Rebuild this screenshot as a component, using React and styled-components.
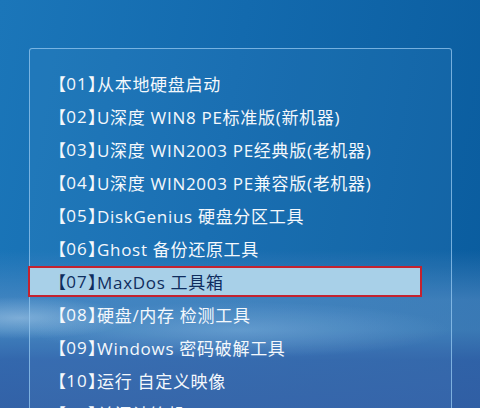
import React from "react";
import styled, { createGlobalStyle } from "styled-components";

const Global = createGlobalStyle`
  html, body { margin: 0; padding: 0; width: 480px; height: 408px; overflow: hidden; }
  #root { width: 480px; height: 408px; }
`;

const Screen = styled.div`
  width: 480px;
  height: 408px;
  box-sizing: border-box;
  overflow: hidden;
  padding: 48px 0 0 29px;
  background:
    radial-gradient(ellipse 160px 30px at 20px 318px, rgba(200, 225, 245, 0.45), rgba(200, 225, 245, 0) 70%),
    radial-gradient(ellipse 300px 40px at 240px 330px, rgba(140, 185, 225, 0.45), rgba(140, 185, 225, 0) 70%),
    linear-gradient(180deg,
      rgba(0,0,0,0) 0px,
      rgba(0,0,0,0) 250px,
      rgba(95, 145, 200, 0.55) 300px,
      rgba(90, 140, 195, 0.6) 330px,
      rgba(60, 100, 170, 0.75) 360px,
      rgba(55, 95, 165, 0.85) 408px),
    linear-gradient(100deg, #1b76b9 0%, #136aae 45%, #0a5c9e 100%);
  font-family: "Open Sans", "Noto Sans CJK SC", sans-serif;
  text-spacing-trim: space-all;
`;

const Panel = styled.div`
  width: 423px;
  height: 420px;
  box-sizing: border-box;
  border: 1px solid rgba(150, 200, 240, 0.75);
  border-radius: 3px;
  background: rgba(120, 180, 230, 0.08);
  padding-top: 19px;
  display: flex;
  flex-direction: column;
  gap: 2px;
`;

const Row = styled.div`
  height: 31px;
  box-sizing: border-box;
  display: flex;
  align-items: center;
  margin-left: ${p => (p.$active ? "-2px" : "0")};
  width: ${p => (p.$active ? "394px" : "auto")};
  padding-left: 27px;
  border: ${p => (p.$active ? "2px solid #c4222f" : "none")};
  background: ${p => (p.$active ? "#a8d0e8" : "transparent")};
  color: ${p => (p.$active ? "#0f2d5e" : "#f4f8fc")};
  font-size: 17px;
  white-space: nowrap;
`;

const Tag = styled.span`
  display: flex;
  align-items: center;
  justify-content: space-between;
  width: 40px;
  flex: none;
`;

const Bracket = styled.span`
  display: inline-block;
  width: 9px;
  overflow: hidden;
  font-family: "Noto Sans CJK SC", sans-serif;
  font-feature-settings: normal;
  text-indent: ${p => (p.$open ? "-8px" : "0")};
`;

const Num = styled.span`
  font-family: "Open Sans", sans-serif;
  letter-spacing: 1px;
`;

const Label = styled.span`
  font-family: "Open Sans", "Noto Sans CJK SC", sans-serif;
  letter-spacing: 0.7px;
`;

const items = [
  ["01", "从本地硬盘启动"],
  ["02", "U深度 WIN8 PE标准版(新机器)"],
  ["03", "U深度 WIN2003 PE经典版(老机器)"],
  ["04", "U深度 WIN2003 PE兼容版(老机器)"],
  ["05", "DiskGenius 硬盘分区工具"],
  ["06", "Ghost 备份还原工具"],
  ["07", "MaxDos 工具箱"],
  ["08", "硬盘/内存 检测工具"],
  ["09", "Windows 密码破解工具"],
  ["10", "运行 自定义映像"],
  ["11", "关闭计算机"],
];

export default function App() {
  return (
    <>
      <Global />
      <Screen>
        <Panel>
          {items.map(([n, t]) => (
            <Row key={n} $active={n === "07"}>
              <Tag>
                <Bracket $open>【</Bracket>
                <Num>{n}</Num>
                <Bracket>】</Bracket>
              </Tag>
              <Label>{t}</Label>
            </Row>
          ))}
        </Panel>
      </Screen>
    </>
  );
}
